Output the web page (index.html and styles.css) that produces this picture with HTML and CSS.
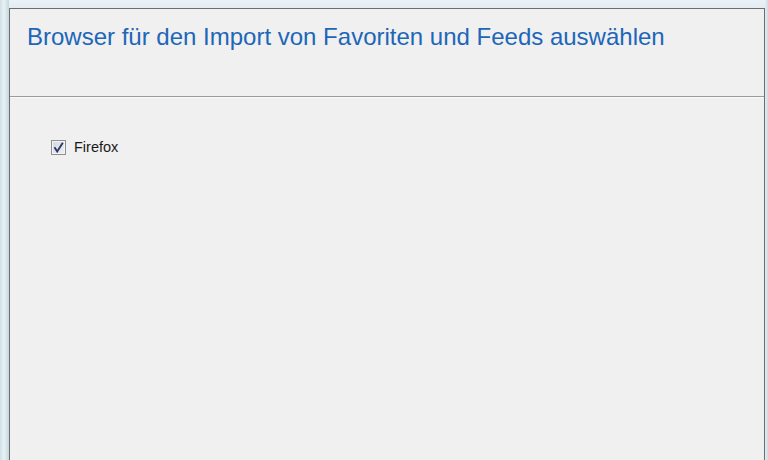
FILE: index.html
```html
<!DOCTYPE html>
<html lang="de">
<head>
<meta charset="utf-8">
<title>Import</title>
<link rel="stylesheet" href="styles.css">
</head>
<body>
<div class="frame">
  <div class="window">
    <div class="header">
      <h1 class="title">Browser für den Import von Favoriten und Feeds auswählen</h1>
    </div>
    <div class="content">
      <label class="option">
        <span class="box">
          <svg width="13" height="13" viewBox="0 0 13 13" aria-hidden="true">
            <path d="M2.5 6.2 L5.2 10.5 L10.8 1.8" fill="none" stroke="#2b3a66" stroke-width="1.9" stroke-linejoin="miter"/>
          </svg>
        </span>
        <span class="label">Firefox</span>
      </label>
    </div>
  </div>
</div>
</body>
</html>
```
FILE: styles.css
```css
html, body {
  margin: 0;
  padding: 0;
  height: 100%;
}
body {
  background: linear-gradient(180deg, #e6eff4 0%, #dce8ee 100%);
  overflow: hidden;
}
.frame {
  height: 100%;
  box-sizing: border-box;
  padding: 8px 3px 0 9px;
  background: linear-gradient(90deg, #cfdfe6 0px, #e9f2f5 4px, #d3e2e9 7px, #c5d6de 9px, transparent 9px),
              linear-gradient(270deg, #cddde5 0px, #e3edf2 3px, transparent 3px),
              linear-gradient(180deg, #eaf2f7 0px, #e2ecf2 8px, #dbe7ee 100%);
}
.window {
  height: 100%;
  box-sizing: border-box;
  background: #f0f0f0;
  border: 1px solid #6d6d6d;
  border-bottom: none;
  display: flex;
  flex-direction: column;
}
.header {
  height: 88px;
  box-sizing: border-box;
  border-bottom: 1px solid #9b9b9b;
  box-shadow: 0 1px 0 #fafafa;
  padding: 14px 0 0 17px;
}
.title {
  margin: 0;
  font-family: "Liberation Sans", Arial, sans-serif;
  font-weight: normal;
  font-size: 24px;
  line-height: 28px;
  color: #1d66b8;
}
.content {
  padding: 42px 0 0 41px;
}
.option {
  display: flex;
  align-items: center;
  gap: 8px;
}
.box {
  width: 13px;
  height: 13px;
  border: 1px solid #8e8f8f;
  background: linear-gradient(135deg, #d5d9e0 0%, #eceef2 100%);
  box-shadow: inset 0 0 0 1px #f4f4f4;
  display: flex;
  align-items: center;
  justify-content: center;
}
.box svg {
  display: block;
}
.label {
  font-family: "Liberation Sans", Arial, sans-serif;
  font-size: 14.5px;
  color: #1a1a1a;
  line-height: 16px;
}
```
